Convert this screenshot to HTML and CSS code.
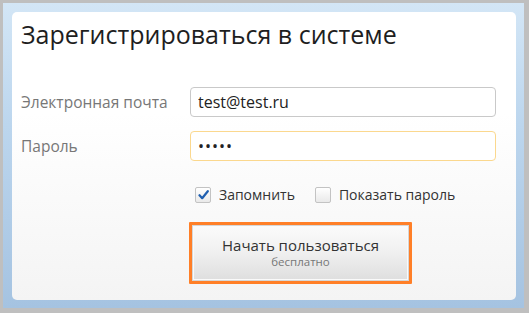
FILE: index.html
```html
<!DOCTYPE html>
<html lang="ru">
<head>
  <meta charset="UTF-8">
  <title>Регистрация</title>
  <link rel="stylesheet" href="styles.css">
</head>
<body>
  <div class="frame">
    <form class="card">
      <h1 class="card-title">Зарегистрироваться в системе</h1>

      <div class="field">
        <label class="field-label" for="email">Электронная почта</label>
        <input class="field-input" id="email" type="text" value="test@test.ru">
      </div>
      <div class="field">
        <label class="field-label" for="password">Пароль</label>
        <input class="field-input field-input--focus" id="password" type="password" value="12345">
      </div>

      <div class="options">
        <label class="check">
          <span class="check-box check-box--on">
            <svg width="11" height="10" viewBox="0 0 11 10"><path d="M1.5 5.2 L4.2 8.2 L9.8 1.2" fill="none" stroke="#1f5fb0" stroke-width="2.2" stroke-linecap="round" stroke-linejoin="round"/></svg>
          </span>
          Запомнить
        </label>
        <label class="check">
          <span class="check-box"></span>
          Показать пароль
        </label>
      </div>

      <div class="actions">
        <button class="start-btn" type="button">
          <span class="start-btn__main">Начать пользоваться</span>
          <span class="start-btn__sub">бесплатно</span>
        </button>
      </div>
    </form>
  </div>
</body>
</html>
```

FILE: styles.css
```css
* {
  margin: 0;
  padding: 0;
  box-sizing: border-box;
}

body {
  background: #bfbfbf;
  padding: 3px 5px 5px 3px;
  font-family: 'Open Sans', sans-serif;
  color: #222;
}

.frame {
  background: linear-gradient(180deg, #d3e6f6 0%, #bcd6ee 40%, #a5c3e1 100%);
  padding: 9px 8px 8px 9px;
}

.card {
  height: 288px;
  background: linear-gradient(180deg, #ffffff 0%, #ffffff 35%, #f4f4f4 100%);
  border-radius: 5px;
  padding: 5px 20px 0 9px;
}

.card-title {
  font-size: 25px;
  font-weight: 400;
  line-height: 34px;
  color: #1e1e1e;
  margin-bottom: 36px;
}

.field {
  display: flex;
  align-items: center;
  margin-bottom: 14px;
}

.field-label {
  width: 169px;
  font-size: 15.5px;
  color: #777;
}

.field-input {
  width: 306px;
  height: 30px;
  border: 1px solid #c9c9c9;
  border-radius: 4px;
  padding: 0 7px;
  font-family: 'Open Sans', sans-serif;
  font-size: 16px;
  color: #222;
  background: #fff;
  outline: none;
}

.field-input--focus {
  border-color: #fbd88e;
  letter-spacing: 1px;
}

.options {
  display: flex;
  gap: 20px;
  margin: 24px 0 0 174px;
  font-size: 14px;
  color: #333;
}

.check {
  display: flex;
  align-items: center;
  gap: 8px;
}

.check-box {
  width: 16px;
  height: 16px;
  border: 1px solid #c3c3c3;
  border-radius: 2px;
  background: linear-gradient(180deg, #ffffff, #e9e9e9);
  display: flex;
  align-items: center;
  justify-content: center;
}

.actions {
  margin: 18px 0 0 168px;
}

.start-btn {
  width: 223px;
  height: 62px;
  border: 3px solid #ff7f27;
  border-radius: 1px;
  padding-top: 11px;
  display: flex;
  flex-direction: column;
  align-items: center;
  font-family: 'Open Sans', sans-serif;
  box-shadow: inset 0 0 0 1px #d6d6d6, inset 0 0 0 2px #fafafa;
  background: linear-gradient(180deg, #fbfbfb 0%, #f1f1f1 45%, #dedede 100%);
}

.start-btn__main {
  font-size: 15px;
  color: #333;
  line-height: 18px;
}

.start-btn__sub {
  font-size: 11.5px;
  color: #777;
  line-height: 14px;
  margin-top: 1px;
}
```
